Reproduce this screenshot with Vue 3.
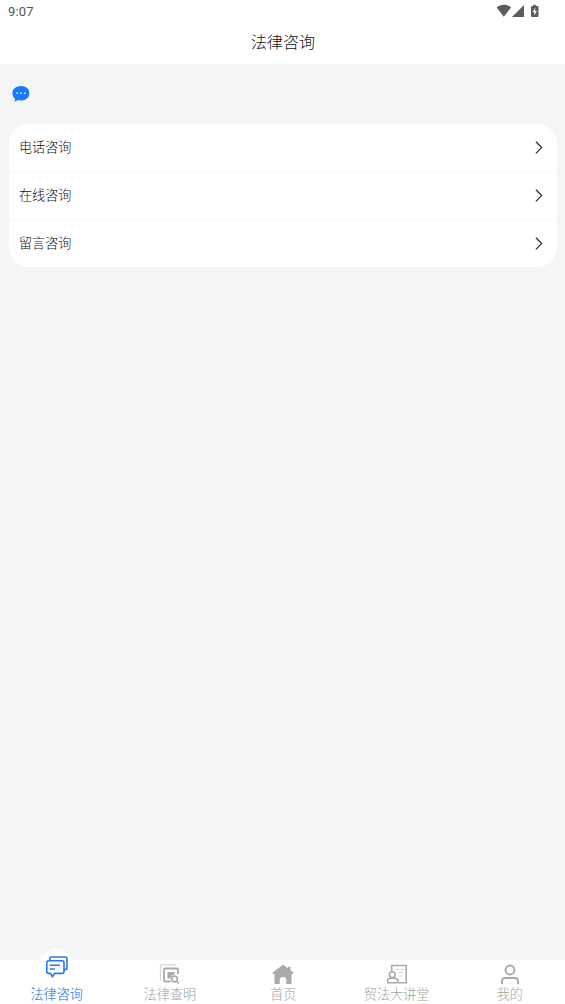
<script setup>
const rows = ['电话咨询', '在线咨询', '留言咨询']
const tabs = [
  { id: 'consult', label: '法律咨询' },
  { id: 'search', label: '法律查明' },
  { id: 'home', label: '首页' },
  { id: 'lecture', label: '贸法大讲堂' },
  { id: 'mine', label: '我的' },
]
const active = 'consult'
</script>

<template>
  <div class="page">
    <div class="status">
      <span class="time">9:07</span>
      <svg class="indicators" width="44" height="14" viewBox="0 0 44 14" fill="#5c5c5c">
        <path d="M.7 3.5C4.6-.1 11.100-.1 15 3.500L7.850 12.800Z" />
        <path d="M28 1v12H16Z" />
        <path d="M37.300.7h2.400v1.200H41.500q1 0 1 1v9q0 1-1 1h-5.500q-1 0-1-1v-9q0-1 1-1h1.300Z" />
        <path d="M39.200 3.800 36.600 8h1.600v3.200L40.900 7h-1.700Z" fill="#fff" />
      </svg>
    </div>
    <header class="title">法律咨询</header>
    <main class="content">
      <svg class="bubble" width="18" height="18" viewBox="0 0 18 18">
        <path d="M9 1c4.900 0 8.400 3 8.400 7.200s-3.500 7.300-8.400 7.300c-1 0-1.900-.1-2.800-.4C5 16 3.500 16.600 2.400 16.700c.6-.8.8-2 .5-3.200C1.300 12.200.4 10.300.4 8.200.4 4 4.100 1 9 1Z" fill="#177aff" />
        <g fill="#e8f2ff"><circle cx="5.200" cy="8.200" r=".9" /><circle cx="9" cy="8.200" r=".9" /><circle cx="12.800" cy="8.200" r=".9" /></g>
      </svg>
      <div class="card">
        <div v-for="row in rows" :key="row" class="row">
          <span class="name">{{ row }}</span>
          <svg width="8" height="14" viewBox="0 0 8 14" fill="none" stroke="#333" stroke-width="1.300">
            <path d="m.9.800 5.800 5.800-5.800 5.800" />
          </svg>
        </div>
      </div>
    </main>
    <nav class="tabs">
      <div v-for="tab in tabs" :key="tab.id" class="tab" :class="{ active: tab.id === active }">
        <svg v-if="tab.id === 'consult'" class="icon" width="24" height="24" viewBox="0 0 24 24" fill="none" stroke="#2878ed" stroke-width="1.600" stroke-linejoin="round" stroke-linecap="round">
          <path d="M4.800 4V2.700q0-1.700 1.700-1.700h13.700q1.800 0 1.800 1.800v9q0 1.800-1.800 1.800h-.7" />
          <path d="M3.600 4.800h13.600q1.800 0 1.800 1.800v9q0 1.800-1.800 1.800H9.700L7.400 20.800 5.600 17.400h-2q-1.800 0-1.800-1.800v-9q0-1.800 1.800-1.800Z" />
          <path d="M5.300 9.300h9M5.300 13h4" />
        </svg>
        <svg v-else-if="tab.id === 'search'" class="icon" width="24" height="24" viewBox="0 0 24 24" fill="none" stroke="#a9a9a9">
          <path d="M2.500 18.500V2.900H18" stroke="#d4d4d4" stroke-width="1.200" />
          <path d="M12.500 19.500H7q-1 0-1-1v-11q0-1 1-1h12q1 0 1 1V12" stroke-width="1.800" />
          <path d="M9.500 10h7v2.500l-3 1-1 3h-3Z" fill="#a9a9a9" stroke="none" />
          <circle cx="16.500" cy="17" r="2.900" fill="#fff" stroke-width="1.600" />
          <path d="m18.700 19.300 2.200 2.200" stroke-width="1.600" />
        </svg>
        <svg v-else-if="tab.id === 'home'" class="icon" width="24" height="24" viewBox="0 0 24 24" fill="#aaa">
          <path d="M12 2.800 17 6.300V4.800h2.400v3.300L22.300 10.500v1.500H20.500V21q0 1-1 1h-4.200v-3.800a3.300 3.300 0 0 0-6.600 0V22H4.500q-1 0-1-1v-9H1.700v-1.500Z" />
        </svg>
        <svg v-else-if="tab.id === 'lecture'" class="icon" width="24" height="24" viewBox="0 0 24 24" fill="none" stroke="#aaa" stroke-width="1.600">
          <path d="M6.700 9V3.500h14.500v17.300H14" />
          <circle cx="7.300" cy="12.700" r="2.900" />
          <path d="M2.800 20.800v-3.200q1.700-1.300 3.200-1.300h2.800q2.400 0 4.200 1.300v3.200Z" />
          <path d="M11 7.500h3m2 0h3M14 10.500h4M14 14h3" stroke="#d0d0d0" stroke-width="1" />
        </svg>
        <svg v-else class="icon" width="24" height="24" viewBox="0 0 24 24" fill="none" stroke="#aaa" stroke-width="1.900">
          <circle cx="12" cy="8" r="4.500" />
          <path d="M4 22.300V19q0-3 3-3h10q3 0 3 3v3.300" />
          <path d="M9 21.700h6" stroke="#e2e2e2" stroke-width=".8" />
        </svg>
        <span class="label">{{ tab.label }}</span>
      </div>
    </nav>
  </div>
</template>

<style>
body {
  margin: 0;
}
</style>

<style scoped>
.page {
  display: flex;
  flex-direction: column;
  height: 1004px;
  overflow: hidden;
  background: #f5f5f5;
  color: #111;
  font-family: "Noto Sans CJK SC", sans-serif;
  font-weight: 300;
}
.status {
  display: flex;
  justify-content: space-between;
  box-sizing: border-box;
  height: 24px;
  padding: 4px 25px 0 8px;
  background: #fff;
}
.time {
  color: #555;
  font: 400 13px/16px Roboto, sans-serif;
  letter-spacing: 0.2px;
}
.title {
  height: 40px;
  padding-left: 1px;
  background: #fff;
  font-size: 16px;
  line-height: 35px;
  text-align: center;
}
.content {
  flex: 1;
  padding: 21px 8px 0 9px;
}
.bubble {
  display: block;
  margin-left: 3px;
}
.card {
  margin-top: 21px;
  overflow: hidden;
  border-radius: 20px;
  background: #fff;
}
.row {
  display: flex;
  align-items: center;
  justify-content: space-between;
  box-sizing: border-box;
  height: 48px;
  padding: 0 14px 0 10px;
  border-bottom: 1px solid #f7f7f7;
  font-size: 13.1px;
}
.row:first-child {
  height: 48.500px;
}
.row:last-child {
  height: 46.500px;
  border-bottom: 0;
}
.name {
  padding-bottom: 3px;
}
.tabs {
  display: flex;
  height: 44px;
  background: #fff;
}
.tab {
  position: relative;
  display: flex;
  flex: 0 0 113.300px;
  flex-direction: column;
  align-items: center;
  padding-top: 2px;
  color: #a2a2a2;
}
.icon {
  position: relative;
  flex: none;
}
.label {
  position: relative;
  margin-top: -2px;
  font-size: 13.1px;
  line-height: 19px;
  white-space: nowrap;
}
.active {
  color: #1068ea;
}
.active::before {
  position: absolute;
  top: -11px;
  left: 50%;
  width: 36px;
  height: 36px;
  border-radius: 50%;
  background: #fff;
  content: "";
  transform: translateX(-50%);
}
.active .icon {
  margin-top: -6px;
  margin-bottom: 6px;
}
</style>
